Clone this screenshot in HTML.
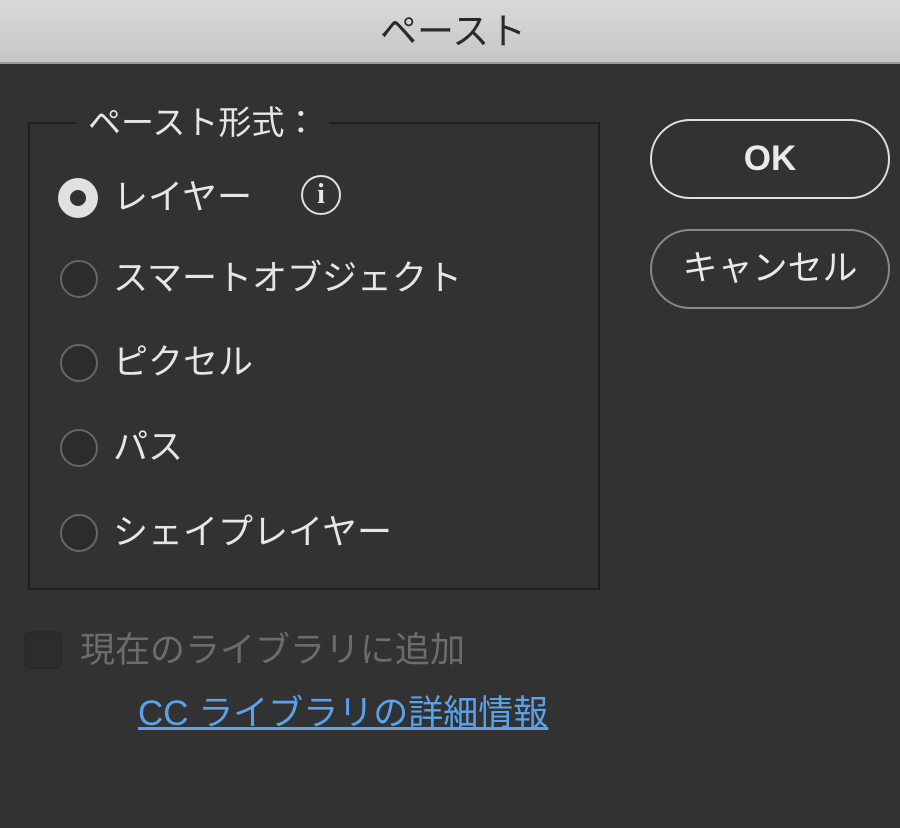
<!DOCTYPE html>
<html><head><meta charset="utf-8"><style>
body{margin:0;width:900px;height:828px;background:#323232;overflow:hidden;font-family:"Liberation Sans","Noto Sans CJK JP",sans-serif;position:relative}
.t{position:absolute;white-space:nowrap;line-height:1}
#bar{position:absolute;left:0;top:0;width:900px;height:62px;background:linear-gradient(#d9d9d9,#c6c6c6);border-bottom:2px solid #9a9a9a}
#box{position:absolute;left:28px;top:122px;width:568px;height:464px;border:2px solid #1f1f1f;box-sizing:content-box}
.r{position:absolute;left:60px;width:34px;height:34px;border:2px solid #666;border-radius:50%;background:#2c2c2c}
.lbl{color:#e6e6e6;font-size:35px;left:113px}
.btn{position:absolute;left:650px;width:236px;height:76px;border:2px solid #e0e0e0;border-radius:40px;color:#eaeaea;font-size:35px;text-align:center;line-height:76px}
</style></head><body>
<div id="bar"></div>
<div class="t" style="left:380px;top:13px;font-size:37px;color:#2a2a2a">ペースト</div>
<div id="box"></div>
<div class="t" style="left:76px;top:106px;padding:0 12px;background:#323232;color:#e6e6e6;font-size:33px">ペースト形式：</div>
<div class="r" style="top:178px;border:none;width:40px;height:40px;left:58px;background:#e0e0e0"></div>
<div style="position:absolute;left:70px;top:190px;width:16px;height:16px;border-radius:50%;background:#323232"></div>
<div class="t lbl" style="top:180px">レイヤー</div>
<div style="position:absolute;left:301px;top:175px;width:40px;height:40px;border:2px solid #e0e0e0;border-radius:50%;box-sizing:border-box;color:#e6e6e6;font-family:'Liberation Serif',serif;font-size:28px;font-weight:bold;text-align:center;line-height:36px">i</div>
<div class="r" style="top:260px"></div><div class="t lbl" style="top:261px">スマートオブジェクト</div>
<div class="r" style="top:344px"></div><div class="t lbl" style="top:345px">ピクセル</div>
<div class="r" style="top:429px"></div><div class="t lbl" style="top:430px">パス</div>
<div class="r" style="top:514px"></div><div class="t lbl" style="top:515px">シェイプレイヤー</div>
<div class="btn" style="top:119px;font-weight:bold">OK</div>
<div class="btn" style="top:229px;border-color:#8a8a8a">キャンセル</div>
<div style="position:absolute;left:24px;top:631px;width:34px;height:34px;border:2px solid #2a2a2a;border-radius:6px;background:#2c2c2c"></div>
<div class="t" style="left:80px;top:633px;font-size:35px;color:#6c6c6c">現在のライブラリに追加</div>
<div class="t" style="left:138px;top:696px;font-size:35px;color:#5aa2ea;text-decoration:underline">CC ライブラリの詳細情報</div>
</body></html>
